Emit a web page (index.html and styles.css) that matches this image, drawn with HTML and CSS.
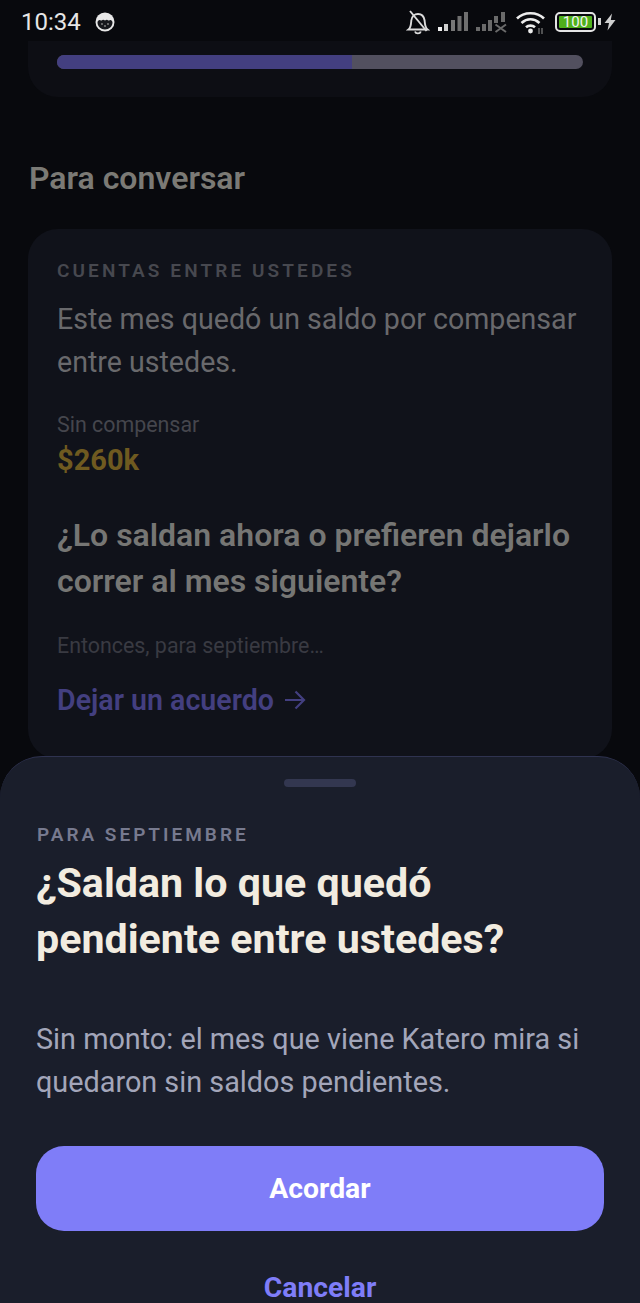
FILE: index.html
```html
<!DOCTYPE html>
<html>
    <head>
        <title>katero</title>
        <link rel="stylesheet" href="styles.css">
    </head>
    <body>
        <div class="screen">
            <!-- status bar -->
            <div class="statusBar">
                <div class="statusLeft">
                    <span class="clock">10:34</span>
                    <svg class="catIcon" width="20" height="20" viewBox="0 0 20 20">
                        <circle cx="10" cy="10" r="9.5" fill="#e8e8e8"/>
                        <path d="M2.500 10.500C2.500 8.800 4.400 7.400 5.600 8.400C6.600 9.200 7.400 7.200 8.400 7.800C9.400 8.500 10.600 8.500 11.600 7.800C12.600 7.200 13.400 9.200 14.400 8.400C15.600 7.400 17.500 8.800 17.500 10.500C17.500 14.500 14 17.500 10 17.500C6 17.500 2.500 14.500 2.500 10.500Z" fill="#17181d"/>
                        <circle cx="7" cy="12" r="0.9" fill="#8a8a8a"/>
                        <circle cx="13" cy="12" r="0.9" fill="#8a8a8a"/>
                        <circle cx="10" cy="14" r="0.9" fill="#8a8a8a"/>
                    </svg>
                </div>
                <div class="statusRight">
                    <svg width="24" height="26" viewBox="0 0 24 26" fill="none" stroke="#dcdcdc" stroke-width="1.900">
                        <path d="M2.500 20.500C5 18.500 5 15.500 5.300 11.500C5.700 7.500 8.500 5 12 5C15.500 5 18 7.500 18.600 11.500C19 15.500 19 18.500 21.500 20.500Z"/>
                        <path d="M9 22.500C9.800 25 14 25 14.800 22.500"/>
                        <path d="M4 2L20.500 22"/>
                    </svg>
                    <svg width="30" height="22" viewBox="0 0 30 22">
                        <rect x="0" y="16" width="4" height="4" fill="#f0f0f0"/>
                        <rect x="6" y="13" width="4" height="7" fill="#d0d0d0"/>
                        <rect x="13" y="9" width="4" height="11" fill="#777"/>
                        <rect x="19.500" y="5" width="4" height="15" fill="#6f6f6f"/>
                        <rect x="26" y="1" width="4" height="19" fill="#6f6f6f"/>
                    </svg>
                    <svg width="31" height="22" viewBox="0 0 31 22" fill="#6a6a6a">
                        <rect x="0" y="16" width="4" height="4"/>
                        <rect x="6" y="13" width="4" height="7"/>
                        <rect x="12" y="9" width="4" height="11"/>
                        <rect x="18" y="5" width="4" height="7"/>
                        <rect x="25" y="1" width="4" height="10"/>
                        <path d="M19.500 13.500L30 21M30 13.500L19.500 21" stroke="#6a6a6a" stroke-width="2"/>
                    </svg>
                    <svg class="wifiIcon" width="30" height="24" viewBox="0 0 30 24" fill="none" stroke="#ececec" stroke-width="2.600">
                        <path d="M1 8.500C8 1.500 21 1.500 28 8.500"/>
                        <path d="M5.500 13C11 8 18 8 23.500 13"/>
                        <path d="M10 17.300C12.500 15 16.500 15 19 17.300"/>
                        <circle cx="14.500" cy="21" r="2.400" fill="#ececec" stroke="none"/>
                        <path d="M23 18V24M26 18V24" stroke="#777" stroke-width="1.300"/>
                    </svg>
                    <div class="battery">
                        <div class="batteryBody"><span class="batteryFill">100</span></div>
                        <div class="batteryTip"></div>
                    </div>
                    <svg class="boltIcon" width="12" height="18" viewBox="0 0 12 18">
                        <path d="M8 0.500L0.500 10H5L3.500 17.500L11.500 7H6.800Z" fill="#cfcfcf"/>
                    </svg>
                </div>
            </div>

            <!-- progreso, ya casi fuera de pantalla -->
            <div class="progressCard">
                <div class="progressTrack">
                    <div class="progressFill" style="width:56%"></div>
                </div>
            </div>

            <h2 class="sectionTitle">Para conversar</h2>

            <div class="talkCard">
                <div class="eyebrow">CUENTAS ENTRE USTEDES</div>
                <p class="talkText">Este mes quedó un saldo por compensar entre ustedes.</p>
                <div class="balanceLabel">Sin compensar</div>
                <div class="balanceValue">$260k</div>
                <p class="talkQuestion">¿Lo saldan ahora o prefieren dejarlo correr al mes siguiente?</p>
                <div class="talkHint">Entonces, para septiembre…</div>
                <a class="talkLink" href="#">Dejar un acuerdo
                    <svg width="24" height="24" viewBox="0 0 24 24" fill="none" stroke="currentColor" stroke-width="2.200">
                        <path d="M2 12H21M12.500 3.500L21 12L12.500 20.500"/>
                    </svg>
                </a>
            </div>

            <!-- bottom sheet -->
            <div class="sheet">
                <div class="sheetHandle"></div>
                <div class="sheetEyebrow">PARA SEPTIEMBRE</div>
                <h1 class="sheetTitle">¿Saldan lo que quedó pendiente entre ustedes?</h1>
                <p class="sheetText">Sin monto: el mes que viene Katero mira si quedaron sin saldos pendientes.</p>
                <button class="btnPrimary">Acordar</button>
                <button class="btnCancel">Cancelar</button>
            </div>
        </div>
    </body>
</html>
```

FILE: styles.css
```css
html,body {
    margin:0;
    background: #08090d;
}
.screen {
    position: relative;
    width: 640px;
    height: 1303px;
    overflow: hidden;
    font-family: Roboto, "Noto Sans", sans-serif;
    background: #08090d;
}
/* status bar */
.statusBar {
    height: 41px;
    padding: 2px 24px 0 21px;
    box-sizing: border-box;
    display: flex;
    justify-content: space-between;
    align-items: center;
}
.statusLeft {
    display: flex;
    align-items: center;
    gap: 14px;
}
.clock {
    color: #e6e6e6;
    font-size: 24px;
}
.statusRight {
    display: flex;
    align-items: center;
    gap: 8px;
}
.wifiIcon {
    margin-left: 1px;
}
.battery {
    display: flex;
    align-items: center;
    margin-left: 1px;
    margin-right: -5px;
}
.batteryBody {
    width: 41px;
    height: 20px;
    box-sizing: border-box;
    border: 2px solid #e4e4e4;
    border-radius: 5px;
    padding: 2px;
    display: flex;
}
.batteryFill {
    flex: 1;
    background: #4fb01c;
    border-radius: 1px;
    color: #f2f2f2;
    font-size: 15px;
    line-height: 12px;
    text-align: center;
}
.batteryTip {
    width: 3px;
    height: 7px;
    margin-left: 2px;
    background: #d0d0d0;
}
/* progress card */
.progressCard {
    margin: 0 28px;
    height: 56px;
    padding: 14px 29px 0;
    box-sizing: border-box;
    background: #0d0e14;
    border-radius: 0 0 30px 30px;
}
.progressTrack {
    height: 14px;
    border-radius: 7px;
    background: #52505f;
    overflow: hidden;
}
.progressFill {
    height: 100%;
    background: #433f80;
}
.sectionTitle {
    margin: 63px 0 0 29px;
    font-size: 32px;
    line-height: 36px;
    font-weight: 600;
    color: #7b7a75;
}
/* card */
.talkCard {
    margin: 33px 28px 0;
    height: 530px;
    padding: 30px 29px 0;
    box-sizing: border-box;
    background: #10121a;
    border-radius: 30px;
}
.eyebrow {
    font-size: 19px;
    line-height: 24px;
    letter-spacing: 3.1px;
    font-weight: 600;
    color: #47484f;
}
.talkText {
    margin: 15px 0 0;
    font-size: 28.6px;
    line-height: 42.5px;
    font-weight: 450;
    color: #69696c;
}
.balanceLabel {
    margin-top: 28px;
    font-size: 21.4px;
    line-height: 28px;
    color: #45464d;
}
.balanceValue {
    margin-top: 3px;
    font-size: 29px;
    line-height: 36px;
    font-weight: 700;
    color: #6f5a20;
}
.talkQuestion {
    margin: 34px 0 0;
    font-size: 32px;
    line-height: 46px;
    font-weight: 600;
    color: #767674;
}
.talkHint {
    margin-top: 28px;
    font-size: 21.4px;
    line-height: 28px;
    color: #393a42;
}
.talkLink {
    margin-top: 22px;
    display: flex;
    align-items: center;
    gap: 9px;
    font-size: 28.6px;
    line-height: 36px;
    font-weight: 600;
    color: #433f80;
    text-decoration: none;
}
/* bottom sheet */
.sheet {
    position: absolute;
    left: 0;
    right: 0;
    top: 756px;
    bottom: 0;
    padding: 0 36px;
    box-sizing: border-box;
    background: #1a1e2b;
    border-top: 1.5px solid #2f3350;
    border-radius: 42px 42px 0 0;
}
.sheetHandle {
    width: 72px;
    height: 8px;
    margin: 22px auto 0;
    border-radius: 4px;
    background: #333750;
}
.sheetEyebrow {
    margin-top: 36px;
    padding-left: 1px;
    font-size: 19px;
    line-height: 24px;
    letter-spacing: 3px;
    font-weight: 600;
    color: #777a8f;
}
.sheetTitle {
    margin: 8px 0 0;
    font-size: 41.2px;
    line-height: 56px;
    font-weight: 700;
    color: #f2ece0;
}
.sheetText {
    margin: 51px 0 0;
    font-size: 28.8px;
    line-height: 43px;
    font-weight: 450;
    color: #a3a6ba;
}
.btnPrimary {
    display: block;
    width: 100%;
    height: 84.5px;
    margin-top: 42px;
    border: none;
    border-radius: 28px;
    background: #7f7df8;
    color: #fff;
    font-family: inherit;
    font-size: 28.3px;
    font-weight: 700;
}
.btnCancel {
    display: block;
    height: 29px;
    margin: 42px auto 0;
    padding: 0;
    border: none;
    background: none;
    color: #7f7df8;
    font-family: inherit;
    font-size: 28.3px;
    line-height: 29px;
    font-weight: 700;
}
```
